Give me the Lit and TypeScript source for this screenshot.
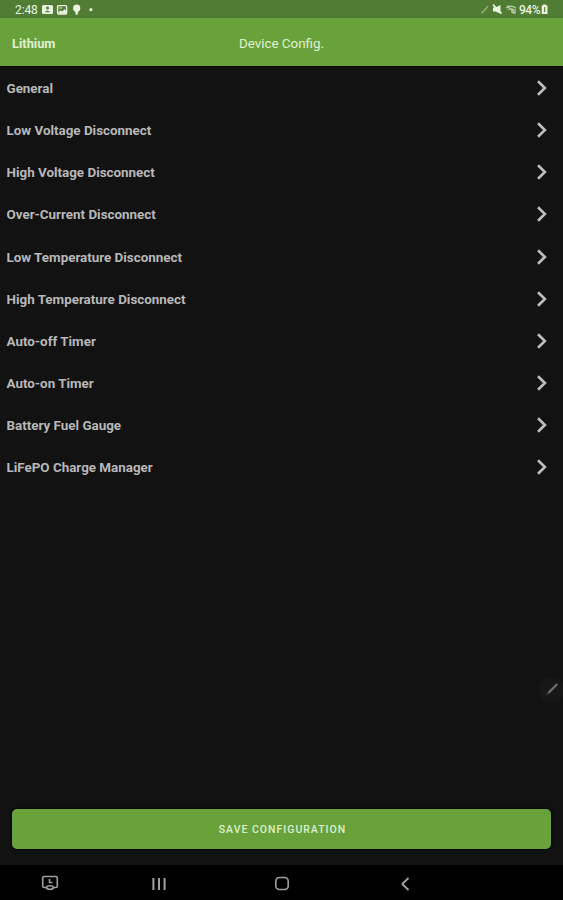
import { LitElement, html, css, svg } from "lit";
import { customElement, property } from "lit/decorators.js";

const ITEMS = [
  "General",
  "Low Voltage Disconnect",
  "High Voltage Disconnect",
  "Over-Current Disconnect",
  "Low Temperature Disconnect",
  "High Temperature Disconnect",
  "Auto-off Timer",
  "Auto-on Timer",
  "Battery Fuel Gauge",
  "LiFePO Charge Manager",
];

@customElement("status-bar")
class StatusBar extends LitElement {
  static styles = css`
    :host { display: flex; justify-content: space-between; height: 18px; box-sizing: border-box;
      padding: 0 15px; background: #507c33; color: #eaf3e2; font-size: 12px; line-height: 20px; }
    .group { display: flex; align-items: flex-start; }
    .time { width: 27px; letter-spacing: -0.1px; }
    .pct { width: 22px; font-weight: 500; letter-spacing: -0.5px; }
    svg { display: block; }
  `;
  render() {
    return html`
      <div class="group">
        <span class="time">2:48</span>
        <svg width="54" height="18" viewBox="0 0 54 18" fill="#eaf3e2">
          <rect x="0" y="5" width="11" height="9" rx="1.5" />
          <circle cx="5.5" cy="8" r="1.5" fill="#507c33" />
          <path d="M2.8 12.3Q5.5 8.8 8.2 12.3Z" fill="#507c33" />
          <rect x="15.6" y="5.6" width="9" height="8.4" rx="1" fill="none" stroke="#eaf3e2" stroke-width="1.4" />
          <path d="M16 13L18.5 10.2L20.3 11.6L22.5 9L24.5 11.5V13.5H16Z" />
          <path d="M17.5 8H20" stroke="#eaf3e2" />
          <circle cx="34.7" cy="8.2" r="3.6" />
          <path d="M33 10.5H36.4L35.6 14.8H33.8Z" />
          <rect x="47.5" y="8.3" width="2.8" height="2.8" rx=".5" />
        </svg>
      </div>
      <div class="group">
        <svg width="39" height="18" viewBox="0 0 39 18">
          <path d="M1.5 13.2L8 6.2" stroke="#93b37c" stroke-width="1.4" />
          <path d="M13 7.5H15.5L20.5 5V13.5L19 13L15.5 11.5H13Z" fill="#eaf3e2" />
          <path d="M13 4.6L21.5 13.6" stroke="#eaf3e2" stroke-width="1.6" />
          <g fill="none" stroke="#b8ceaa" stroke-width="1.2">
            <path d="M26 8.2Q31 4 36 8.2M28 10Q31 7.5 34 10M27 5.5L35.5 13.5" />
            <circle cx="33.5" cy="11.3" r="1.8" />
          </g>
        </svg>
        <span class="pct">94%</span>
        <svg width="7" height="18" viewBox="0 0 7 18">
          <path d="M2 4.5H5V5.5H6.5V14H.7V5.5H2Z" fill="#eaf3e2" />
          <path d="M3.6 7V12" fill="none" stroke="#507c33" stroke-width="1.1" />
        </svg>
      </div>
    `;
  }
}

@customElement("config-row")
class ConfigRow extends LitElement {
  @property() label = "";
  static styles = css`
    :host { display: flex; justify-content: space-between; align-items: center; height: 42.15px;
      padding: 0 15px 0 6.5px; color: #b8b8b8; font-size: 13.4px; font-weight: 700; }
    span { padding-top: 0.8px; }
    svg { display: block; }
  `;
  render() {
    return html`<span>${this.label}</span>
      <svg width="12" height="18" viewBox="0 0 12 18" fill="none" stroke="#bebebe" stroke-width="2.6">
        <path d="M2 2.3L8.9 9L2 15.7" />
      </svg>`;
  }
}

const icon = (body: unknown) => html`<svg width="24" height="24" viewBox="0 0 24 24" fill="none"
  stroke="#a0a0a0" stroke-width="1.6" stroke-linejoin="round">${body}</svg>`;

@customElement("nav-bar")
class NavBar extends LitElement {
  static styles = css`
    :host { display: grid; grid-template-columns: 100px 118px 128px 118px; align-items: center;
      justify-items: center; height: 35px; background: #000; }
    svg { display: block; margin-top: 2px; }
  `;
  render() {
    return html`
      ${icon(svg`<path d="M8.5 15.5H6.2Q4.7 15.5 4.7 14V6Q4.7 4.5 6.2 4.5H17.8Q19.3 4.5 19.3 6V14Q19.3 15.5 17.8 15.5H15.5" />
        <path d="M11.5 7V10.5H14.5" /><ellipse cx="12" cy="15.6" rx="3.4" ry="1.8" />`)}
      ${icon(svg`<path d="M6.4 6V18M12 6V18M17.6 6V18" stroke-width="2" />`)}
      ${icon(svg`<rect x="5.8" y="5.5" width="12.4" height="12" rx="3.5" />`)}
      ${icon(svg`<path d="M15.5 6L9.3 12L15.5 18" stroke-width="1.8" />`)}
    `;
  }
}

@customElement("app-root")
class AppRoot extends LitElement {
  static styles = css`
    :host { display: flex; flex-direction: column; position: relative; width: 100%; height: 900px;
      overflow: hidden; background: #121212; font-family: Roboto, sans-serif; }
    header { display: grid; grid-template-columns: 1fr auto 1fr; align-items: center; height: 49px;
      box-sizing: border-box; padding: 2px 12px 0; background: #69a23a; color: #e0f0d2;
      border-bottom: 1px solid #0a0a0a; }
    .back { font-size: 12.8px; font-weight: 700; }
    .title { font-size: 13.4px; font-weight: 400; }
    main { flex: 1; }
    .save { display: block; height: 40px; margin: 0 12px 16px; padding: 0 0 0 2px; border: 0; border-radius: 5px;
      background: #69a23a; color: #dcefcd; font: 500 10.5px Roboto, sans-serif; letter-spacing: 1px;
      box-shadow: 0 0 2px 1px #080808; }
    .pen { position: absolute; right: 0; top: 674px; display: block; }
  `;
  render() {
    return html`
      <status-bar></status-bar>
      <header><span class="back">Lithium</span><span class="title">Device Config.</span></header>
      <main>${ITEMS.map((t) => html`<config-row .label=${t}></config-row>`)}</main>
      <button class="save">SAVE CONFIGURATION</button>
      <nav-bar></nav-bar>
      <svg class="pen" width="26" height="32" viewBox="0 0 26 32">
        <circle cx="15" cy="16" r="13" fill="#171717" />
        <path d="M11.5 18.8L20.3 10" stroke="#6b6b6b" stroke-width="2.4" />
        <path d="M9.5 20.6L11.7 18.6" stroke="#4a4a4a" stroke-width="1.2" />
      </svg>
    `;
  }
}
